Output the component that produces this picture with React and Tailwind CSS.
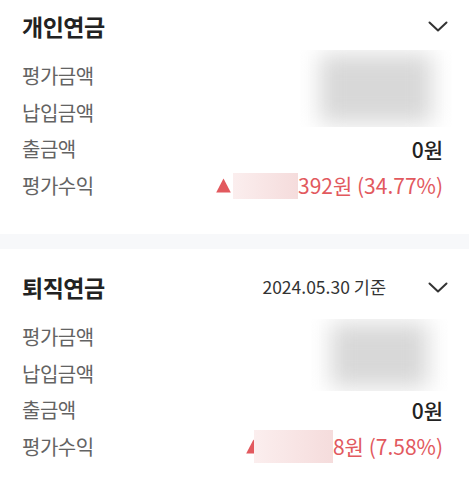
import { useState } from "react";

const font = { fontFamily: '"Noto Sans CJK KR", "Noto Sans", sans-serif' };

const Chevron = () => (
  <svg width="20" height="11" viewBox="0 0 20 11" fill="none" className="shrink-0">
    <path d="M1.5 1.5 L10 9.5 L18.5 1.5" stroke="#333" strokeWidth="2" strokeLinecap="round" strokeLinejoin="round" />
  </svg>
);

const Triangle = () => (
  <svg width="15" height="15" viewBox="0 0 15 15" className="shrink-0">
    <polygon points="7.5,0.5 14.8,14.5 0.2,14.5" fill="#e2595e" />
  </svg>
);

// Blurred (masked) amount block
const Blurred = ({ className }) => (
  <div className={`overflow-hidden bg-white ${className}`}>
    <div className="h-full w-full px-5 py-1">
      <div className="h-full w-full bg-[#d8d8d8] blur-[11px]" />
    </div>
  </div>
);

const Label = ({ children }) => (
  <div className="h-[36.5px] flex items-center text-[20px] tracking-[-0.5px] text-[#636363]">{children}</div>
);

const Section = ({ title, date, blurClass, profit, pinkClass, first }) => {
  const [open, setOpen] = useState(true);

  return (
    <section className={`bg-white pl-[22px] pr-[21px] ${first ? "pt-[10px] pb-[30px]" : "pt-[22px] pb-[30px]"}`}>
      {/* Header */}
      <div className="h-8 flex items-center justify-between">
        <h2 className="text-[23px] font-bold text-[#222] tracking-[-0.5px]">{title}</h2>
        <div className="flex items-center">
          {date && <span className="text-[17.5px] text-[#333] mr-[42px]">{date}</span>}
          <button onClick={() => setOpen((p) => !p)} className="flex items-center">
            <Chevron />
          </button>
        </div>
      </div>

      {/* Rows */}
      <div className="mt-4">
        <div className="flex justify-between">
          <div>
            <Label>평가금액</Label>
            <Label>납입금액</Label>
          </div>
          <Blurred className={blurClass} />
        </div>
        <div className="flex justify-between items-center pr-[5px]">
          <Label>출금액</Label>
          <span className="text-[21px] font-medium text-[#222]">0원</span>
        </div>
        <div className="flex justify-between items-center pr-[5px]">
          <Label>평가수익</Label>
          <div className="flex items-center text-[21px] text-[#e2595e]">
            <Triangle />
            <div className={`bg-gradient-to-r from-[#fbeeee] to-[#f5dcdc] ${pinkClass}`} />
            <span>{profit}</span>
          </div>
        </div>
      </div>
    </section>
  );
};

export default function App() {
  return (
    <div className="w-[469px] min-h-[485px] bg-white" style={font}>
      <Section
        first
        title="개인연금"
        blurClass="w-[152px] h-[77px] -mt-2 -mr-1"
        pinkClass="w-[65px] h-[26px] ml-[2px]"
        profit="392원 (34.77%)"
      />
      <div className="h-[15px] bg-[#f7f8fa]" />
      <Section
        title="퇴직연금"
        date="2024.05.30 기준"
        blurClass="w-[137px] h-[72px]"
        pinkClass="w-[79px] h-[33px] -ml-[7px]"
        profit="8원 (7.58%)"
      />
    </div>
  );
}
